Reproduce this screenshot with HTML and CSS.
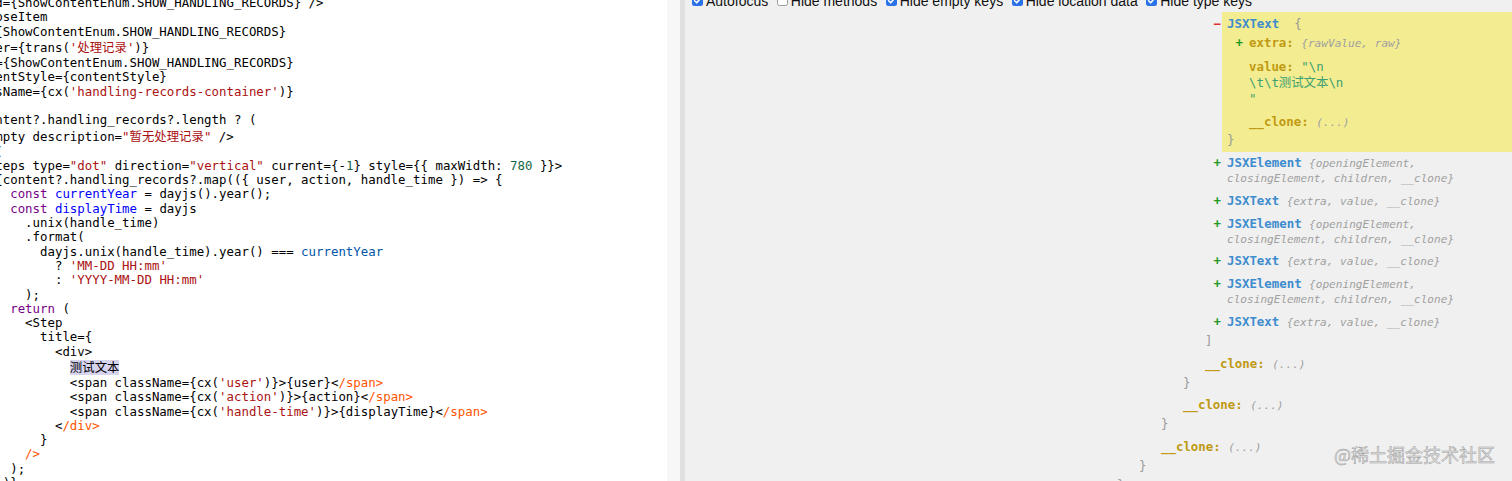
FILE: index.html
```html
<!DOCTYPE html>
<html lang="zh">
<head>
<meta charset="utf-8">
<title>AST Explorer</title>
<link rel="stylesheet" href="styles.css">
</head>
<body>
<div class="app">
  <div class="editor">
    <div class="code">
      <div class="ln">             id={ShowContentEnum.SHOW_HANDLING_RECORDS} /&gt;</div>
      <div class="ln">        &lt;CollapseItem</div>
      <div class="ln">          key={ShowContentEnum.SHOW_HANDLING_RECORDS}</div>
      <div class="ln tall">          header={trans(<span class="str">'<span class="cjk">处理记录</span>'</span>)}</div>
      <div class="ln">          name={ShowContentEnum.SHOW_HANDLING_RECORDS}</div>
      <div class="ln">          contentStyle={contentStyle}</div>
      <div class="ln">          className={cx(<span class="str">'handling-records-container'</span>)}</div>
      <div class="ln">        &gt;</div>
      <div class="ln">          {!content?.handling_records?.length ? (</div>
      <div class="ln tall">            &lt;Empty description=<span class="str">"<span class="cjk">暂无处理记录</span>"</span> /&gt;</div>
      <div class="ln">          ) : (</div>
      <div class="ln">            &lt;Steps type=<span class="str">"dot"</span> direction=<span class="str">"vertical"</span> current={-<span class="num">1</span>} style={{ maxWidth: <span class="num">780</span> }}&gt;</div>
      <div class="ln">              {content?.handling_records?.map(({ user, action, handle_time }) =&gt; {</div>
      <div class="ln">                <span class="kw">const</span> <span class="def">currentYear</span> = dayjs().year();</div>
      <div class="ln">                <span class="kw">const</span> <span class="def">displayTime</span> = dayjs</div>
      <div class="ln">                  .unix(handle_time)</div>
      <div class="ln">                  .format(</div>
      <div class="ln">                    dayjs.unix(handle_time).year() === <span class="v2">currentYear</span></div>
      <div class="ln">                      ? <span class="str">'MM-DD HH:mm'</span></div>
      <div class="ln">                      : <span class="str">'YYYY-MM-DD HH:mm'</span></div>
      <div class="ln">                  );</div>
      <div class="ln">                <span class="kw">return</span> (</div>
      <div class="ln">                  &lt;Step</div>
      <div class="ln">                    title={</div>
      <div class="ln">                      &lt;div&gt;</div>
      <div class="ln tall">                        <span class="sel"><span class="cjk">测试文本</span></span></div>
      <div class="ln">                        &lt;span className={cx(<span class="str">'user'</span>)}&gt;{user}&lt;<span class="rx">/span&gt;</span></div>
      <div class="ln">                        &lt;span className={cx(<span class="str">'action'</span>)}&gt;{action}&lt;<span class="rx">/span&gt;</span></div>
      <div class="ln">                        &lt;span className={cx(<span class="str">'handle-time'</span>)}&gt;{displayTime}&lt;<span class="rx">/span&gt;</span></div>
      <div class="ln">                      &lt;<span class="rx">/div&gt;</span></div>
      <div class="ln">                    }</div>
      <div class="ln">                  <span class="rx">/&gt;</span></div>
      <div class="ln">                );</div>
      <div class="ln">              })}</div>
    </div>
  </div>
  <div class="track"></div>
  <div class="splitter"></div>
  <div class="output">
    <div class="toolbar">
      <span class="opt"><span class="cb on"><svg viewBox="0 0 11 11" width="11" height="11"><path d="M2.6 5.7 L4.7 7.8 L8.5 3.4" fill="none" stroke="#fff" stroke-width="1.6" stroke-linecap="round" stroke-linejoin="round"/></svg></span>Autofocus</span>
      <span class="opt"><span class="cb off"></span>Hide methods</span>
      <span class="opt"><span class="cb on"><svg viewBox="0 0 11 11" width="11" height="11"><path d="M2.6 5.7 L4.7 7.8 L8.5 3.4" fill="none" stroke="#fff" stroke-width="1.6" stroke-linecap="round" stroke-linejoin="round"/></svg></span>Hide empty keys</span>
      <span class="opt"><span class="cb on"><svg viewBox="0 0 11 11" width="11" height="11"><path d="M2.6 5.7 L4.7 7.8 L8.5 3.4" fill="none" stroke="#fff" stroke-width="1.6" stroke-linecap="round" stroke-linejoin="round"/></svg></span>Hide location data</span>
      <span class="opt"><span class="cb on"><svg viewBox="0 0 11 11" width="11" height="11"><path d="M2.6 5.7 L4.7 7.8 L8.5 3.4" fill="none" stroke="#fff" stroke-width="1.6" stroke-linecap="round" stroke-linejoin="round"/></svg></span>Hide type keys</span>
    </div>
    <div class="tree-view">
      <ul>
        <li class="cont">
          <ul>
            <li class="cont">
              <ul>
                <li class="cont">
                  <ul>
                    <li class="cont">
                      <ul>
                        <li class="cont">
                          <ul>
                            <li class="hl"><span class="mk minus">−</span><span class="tn">JSXText</span>&nbsp; <span class="brace">{</span>
                              <ul>
                                <li><span class="mk plus">+</span><span class="key">extra:</span> <span class="ph">{rawValue, raw}</span></li>
                                <li class="val"><span class="key">value:</span> <span class="str">"\n
\t\t<span class="cjk">测试文本</span>\n
"</span></li>
                                <li><span class="key">__clone:</span> <span class="ph">(...)</span></li>
                              </ul>
                              <div class="close">}</div>
                            </li>
                            <li><span class="mk plus">+</span><span class="tn">JSXElement</span> <span class="ph">{openingElement,<br>closingElement, children, __clone}</span></li>
                            <li><span class="mk plus">+</span><span class="tn">JSXText</span> <span class="ph">{extra, value, __clone}</span></li>
                            <li><span class="mk plus">+</span><span class="tn">JSXElement</span> <span class="ph">{openingElement,<br>closingElement, children, __clone}</span></li>
                            <li><span class="mk plus">+</span><span class="tn">JSXText</span> <span class="ph">{extra, value, __clone}</span></li>
                            <li><span class="mk plus">+</span><span class="tn">JSXElement</span> <span class="ph">{openingElement,<br>closingElement, children, __clone}</span></li>
                            <li><span class="mk plus">+</span><span class="tn">JSXText</span> <span class="ph">{extra, value, __clone}</span></li>
                          </ul>
                          <div class="close">]</div>
                        </li>
                        <li><span class="key">__clone:</span> <span class="ph">(...)</span></li>
                      </ul>
                      <div class="close">}</div>
                    </li>
                    <li><span class="key">__clone:</span> <span class="ph">(...)</span></li>
                  </ul>
                  <div class="close">}</div>
                </li>
                <li><span class="key">__clone:</span> <span class="ph">(...)</span></li>
              </ul>
              <div class="close">}</div>
            </li>
          </ul>
          <div class="close">}</div>
        </li>
      </ul>
    </div>
    <div class="watermark">@稀土掘金技术社区</div>
  </div>
</div>
</body>
</html>
```

FILE: styles.css
```css
* { box-sizing: border-box; }
html, body { margin: 0; padding: 0; }
body {
  width: 1512px;
  height: 481px;
  overflow: hidden;
  background: #f0f0f0;
}
.app {
  display: flex;
  height: 481px;
}

/* ---------- editor ---------- */
.editor {
  flex: none;
  width: 667px;
  background: #fff;
  overflow: hidden;
}
.code {
  margin: -3.85px 0 0 -109.2px;
  font-family: "DejaVu Sans Mono", "Noto Sans CJK SC", monospace;
  font-size: 12.4px;
  line-height: 14.3px;
  color: #000;
}
.ln {
  height: 14.3px;
  white-space: pre;
}
.ln.tall {
  height: 17px;
  line-height: 17px;
}
.cjk {
  font-family: "Noto Sans CJK SC", sans-serif;
  line-height: 12px;
}
.kw { color: #770088; }
.def { color: #0000ff; }
.v2 { color: #0055aa; }
.str { color: #aa1111; }
.num { color: #116644; }
.rx { color: #ff5500; }
.sel {
  display: inline-block;
  height: 15px;
  margin-top: 1px;
  line-height: 15px;
  vertical-align: top;
  background: #d7d4f0;
}

.track {
  flex: none;
  width: 13px;
  background: #f7f7f7;
}
.splitter {
  flex: none;
  width: 5px;
  background: #e0e0e0;
}

/* ---------- output ---------- */
.output {
  flex: 1;
  position: relative;
  overflow: hidden;
  background: #f0f0f0;
  display: flex;
  flex-direction: column;
}
.toolbar {
  flex: none;
  display: flex;
  align-items: center;
  height: 16px;
  margin-top: -7.4px;
  padding-left: 7px;
  font-family: "Liberation Sans", Arial, sans-serif;
  font-size: 14px;
  line-height: 16px;
  color: #111;
  white-space: nowrap;
}
.opt {
  display: flex;
  align-items: center;
  margin-right: 8.5px;
}
.cb {
  flex: none;
  display: inline-flex;
  width: 11px;
  height: 11px;
  margin-right: 3px;
  border-radius: 2.5px;
}
.cb.on { background: #2a72e8; }
.cb.off { background: #fff; border: 1px solid #9b9b9b; }

.tree-view {
  margin-top: 3.4px;
  padding-left: 432px;
  font-family: "DejaVu Sans Mono", "Noto Sans CJK SC", monospace;
  font-size: 12.4px;
  line-height: 14.85px;
  color: #999;
}
.tree-view ul {
  list-style: none;
  margin: 0;
  padding: 0 0 0 22px;
}
.tree-view > ul { padding-left: 0; }
.tree-view li {
  padding: 4px 0;
  white-space: nowrap;
}
.tree-view li.cont { padding-top: 0; }
.tree-view li.hl {
  margin-left: -5px;
  padding: 4.9px 0 4px 5px;
  background: #f3ec91;
}
.tree-view li.val { line-height: 16px; }
.close { color: #999; }

.mk {
  display: inline-block;
  width: 13.5px;
  margin-left: -13.5px;
  font-weight: bold;
}
.mk.minus { color: #e0302e; }
.mk.plus { color: #1f9a1f; }
.tn { color: #3d8cce; font-weight: bold; }
.key { color: #bf9a12; font-weight: bold; }
.brace { color: #999; }
.ph {
  font-size: 11.1px;
  line-height: 12px;
  font-style: italic;
  color: #a0a0a0;
}
.tree-view .str {
  color: #3ca070;
  white-space: pre;
}

.watermark {
  position: absolute;
  right: 17px;
  top: 445px;
  font-family: "Noto Sans CJK SC", sans-serif;
  font-size: 18px;
  line-height: 18px;
  color: #e4e4e4;
  -webkit-text-stroke: 0.5px #9c9c9c;
  white-space: nowrap;
}
```
